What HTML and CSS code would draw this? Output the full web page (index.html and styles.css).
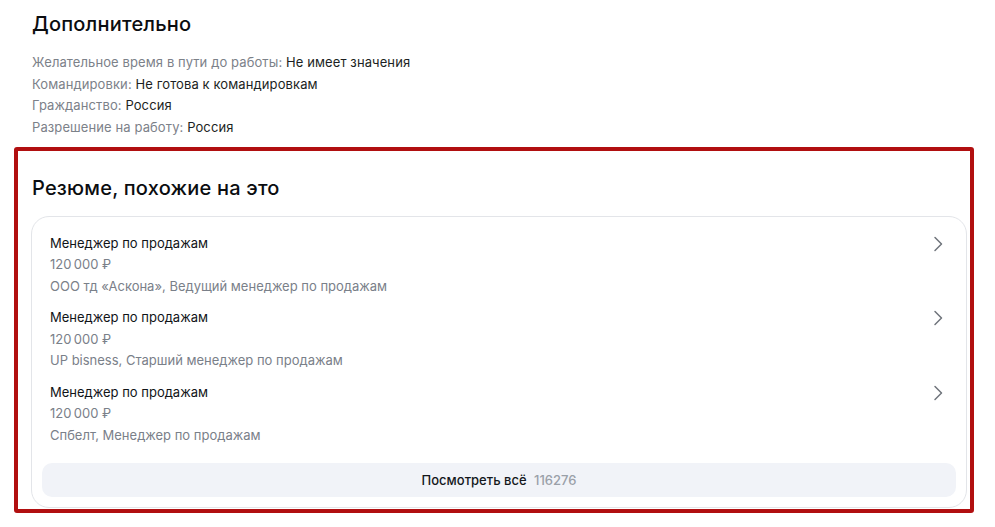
FILE: index.html
```html
<!DOCTYPE html>
<html lang="ru">
<head>
<meta charset="utf-8">
<link rel="stylesheet" href="styles.css">
</head>
<body>
<div class="page">
  <section class="extra">
    <h2 class="title">Дополнительно</h2>
    <div class="info">
      <p><span class="label">Желательное время в пути до работы:</span> Не имеет значения</p>
      <p><span class="label">Командировки:</span> Не готова к командировкам</p>
      <p><span class="label">Гражданство:</span> Россия</p>
      <p><span class="label">Разрешение на работу:</span> Россия</p>
    </div>
  </section>
  <section class="similar">
    <h2 class="title similar-title">Резюме, похожие на это</h2>
    <div class="card">
      <a class="item">
        <div class="item-text">
          <div class="item-name">Менеджер по продажам</div>
          <div class="item-sub">120&#8201;000 ₽</div>
          <div class="item-sub">ООО тд «Аскона», Ведущий менеджер по продажам</div>
        </div>
        <svg class="chev" width="10" height="16" viewBox="0 0 10 16"><path d="M2 1.5 L8.5 8 L2 14.5" fill="none" stroke="#6f747b" stroke-width="1.5" stroke-linecap="round" stroke-linejoin="round"/></svg>
      </a>
      <a class="item">
        <div class="item-text">
          <div class="item-name">Менеджер по продажам</div>
          <div class="item-sub">120&#8201;000 ₽</div>
          <div class="item-sub">UP bisness, Старший менеджер по продажам</div>
        </div>
        <svg class="chev" width="10" height="16" viewBox="0 0 10 16"><path d="M2 1.5 L8.5 8 L2 14.5" fill="none" stroke="#6f747b" stroke-width="1.5" stroke-linecap="round" stroke-linejoin="round"/></svg>
      </a>
      <a class="item">
        <div class="item-text">
          <div class="item-name">Менеджер по продажам</div>
          <div class="item-sub">120&#8201;000 ₽</div>
          <div class="item-sub">Спбелт, Менеджер по продажам</div>
        </div>
        <svg class="chev" width="10" height="16" viewBox="0 0 10 16"><path d="M2 1.5 L8.5 8 L2 14.5" fill="none" stroke="#6f747b" stroke-width="1.5" stroke-linecap="round" stroke-linejoin="round"/></svg>
      </a>
      <button class="more">Посмотреть всё <span class="count">116276</span></button>
    </div>
  </section>
</div>
</body>
</html>
```
FILE: styles.css
```css
* { box-sizing: border-box; }
html, body { margin: 0; padding: 0; background: #fff; }
body {
  font-family: Inter, "Noto Sans", "Liberation Sans", sans-serif;
  color: #111418;
  width: 995px;
  height: 527px;
  overflow: hidden;
}
.page { padding-top: 11px; }
.extra { padding-left: 32px; }
.title {
  margin: 0;
  font-size: 20px;
  line-height: 26px;
  font-weight: 500;
  letter-spacing: 0.2px;
  color: #0b0d10;
}
.info { margin-top: 15px; }
.info p {
  margin: 0;
  font-size: 13px;
  line-height: 21.7px;
  letter-spacing: 0.1px;
  color: #1c1f23;
}
.label { color: #7c8189; }
.similar {
  margin: 8px 0 0 14px;
  width: 960px;
  border: 4px solid #b10f10;
  border-radius: 3px;
  padding: 24px 3px 1px 13px;
}
.similar-title { margin-left: 1px; }
.card {
  margin-top: 15px;
  border: 1px solid #e3e5e9;
  border-radius: 18px;
  padding: 16px 10px 10px 10px;
  display: flex;
  flex-direction: column;
  gap: 10px;
}
.item {
  display: flex;
  justify-content: space-between;
  align-items: flex-start;
  padding: 0 13px 0 8px;
  cursor: pointer;
}
.item-name, .item-sub {
  font-size: 13px;
  line-height: 21.5px;
}
.item-name { color: #111418; }
.item-sub { color: #7a8089; }
.chev { margin-top: 3px; }
.more {
  margin-top: 7px;
  height: 34px;
  border: none;
  border-radius: 10px;
  background: #f1f3f8;
  font-family: inherit;
  font-size: 13px;
  font-weight: 500;
  color: #14171b;
  cursor: pointer;
}
.count { color: #9aa0a8; margin-left: 4px; }
```
